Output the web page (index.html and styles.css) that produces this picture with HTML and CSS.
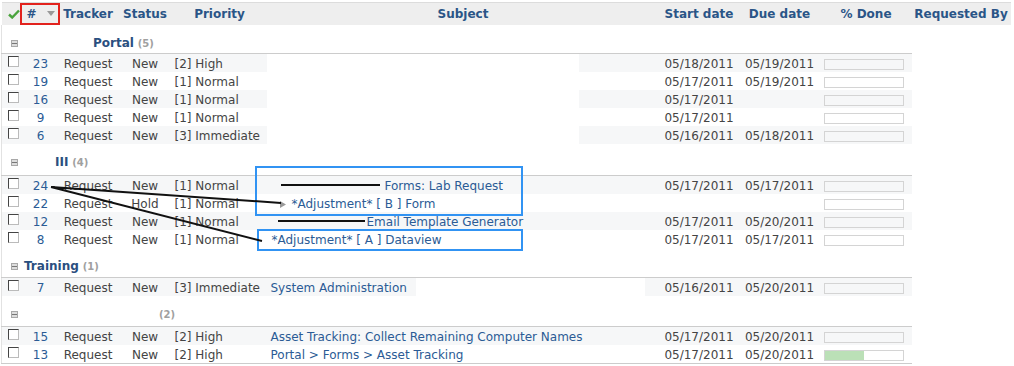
FILE: index.html
```html
<!DOCTYPE html>
<html lang="en">
  <head>
    <meta charset="UTF-8" />
    <title>Issues</title>
    <link rel="stylesheet" href="styles.css">
  </head>
  <body>
    <div class="sheet">
      <table class="issues">
        <colgroup>
          <col class="c-check" />
          <col class="c-id" />
          <col class="c-tracker" />
          <col class="c-status" />
          <col class="c-priority" />
          <col class="c-subject" />
          <col class="c-start" />
          <col class="c-due" />
          <col class="c-done" />
          <col class="c-author" />
        </colgroup>
        <thead>
          <tr>
            <th>
              <svg class="check-all" width="12" height="10" viewBox="0 0 12 10">
                <path d="M1 5.5 L4.2 8.5 L11 1.5" fill="none" stroke="#4aa33c" stroke-width="2.4" />
              </svg>
            </th>
            <th>#<svg class="sort" width="8" height="5" viewBox="0 0 8 5"><path d="M0 0 H8 L4 5 Z" fill="#999" /></svg></th>
            <th>Tracker</th>
            <th>Status</th>
            <th>Priority</th>
            <th>Subject</th>
            <th>Start date</th>
            <th>Due date</th>
            <th>% Done</th>
            <th>Requested By</th>
          </tr>
        </thead>
        <tbody>
          <tr class="group g-short">
            <td colspan="9"><span class="toggle"></span><span class="name shift-portal">Portal</span> <span class="count">(5)</span></td>
            <td class="author"></td>
          </tr>
          <tr class="odd">
            <td><span class="cb"></span></td>
            <td class="id"><a href="#">23</a></td>
            <td class="tracker">Request</td>
            <td class="status">New</td>
            <td class="priority">[2] High</td>
            <td class="subject masked"></td>
            <td class="date">05/18/2011</td>
            <td class="date">05/19/2011</td>
            <td><div class="progress"></div></td>
            <td class="author"></td>
          </tr>
          <tr>
            <td><span class="cb"></span></td>
            <td class="id"><a href="#">19</a></td>
            <td class="tracker">Request</td>
            <td class="status">New</td>
            <td class="priority">[1] Normal</td>
            <td class="subject masked"></td>
            <td class="date">05/17/2011</td>
            <td class="date">05/19/2011</td>
            <td><div class="progress"></div></td>
            <td class="author"></td>
          </tr>
          <tr class="odd">
            <td><span class="cb"></span></td>
            <td class="id"><a href="#">16</a></td>
            <td class="tracker">Request</td>
            <td class="status">New</td>
            <td class="priority">[1] Normal</td>
            <td class="subject masked"></td>
            <td class="date">05/17/2011</td>
            <td class="date"></td>
            <td><div class="progress"></div></td>
            <td class="author"></td>
          </tr>
          <tr>
            <td><span class="cb"></span></td>
            <td class="id"><a href="#">9</a></td>
            <td class="tracker">Request</td>
            <td class="status">New</td>
            <td class="priority">[1] Normal</td>
            <td class="subject masked"></td>
            <td class="date">05/17/2011</td>
            <td class="date"></td>
            <td><div class="progress"></div></td>
            <td class="author"></td>
          </tr>
          <tr class="odd">
            <td><span class="cb"></span></td>
            <td class="id"><a href="#">6</a></td>
            <td class="tracker">Request</td>
            <td class="status">New</td>
            <td class="priority">[3] Immediate</td>
            <td class="subject masked"></td>
            <td class="date">05/16/2011</td>
            <td class="date">05/18/2011</td>
            <td><div class="progress"></div></td>
            <td class="author"></td>
          </tr>

          <tr class="group g-tall">
            <td colspan="9"><span class="toggle"></span><span class="name shift-iii">III</span> <span class="count">(4)</span></td>
            <td class="author"></td>
          </tr>
          <tr class="odd">
            <td><span class="cb"></span></td>
            <td class="id"><a href="#">24</a></td>
            <td class="tracker">Request</td>
            <td class="status">New</td>
            <td class="priority">[1] Normal</td>
            <td class="subject pad-lab"><a href="#">Forms: Lab Request</a></td>
            <td class="date">05/17/2011</td>
            <td class="date">05/17/2011</td>
            <td><div class="progress"></div></td>
            <td class="author"></td>
          </tr>
          <tr>
            <td><span class="cb"></span></td>
            <td class="id"><a href="#">22</a></td>
            <td class="tracker">Request</td>
            <td class="status">Hold</td>
            <td class="priority">[1] Normal</td>
            <td class="subject child"><svg class="arrow" width="6" height="7" viewBox="0 0 6 7"><path d="M0 0 L6 3.5 L0 7 Z" fill="#999" /></svg><a href="#">*Adjustment* [ B ] Form</a></td>
            <td class="date"></td>
            <td class="date"></td>
            <td><div class="progress"></div></td>
            <td class="author"></td>
          </tr>
          <tr class="odd">
            <td><span class="cb"></span></td>
            <td class="id"><a href="#">12</a></td>
            <td class="tracker">Request</td>
            <td class="status">New</td>
            <td class="priority">[1] Normal</td>
            <td class="subject pad-email"><a href="#">Email Template Generator</a></td>
            <td class="date">05/17/2011</td>
            <td class="date">05/20/2011</td>
            <td><div class="progress"></div></td>
            <td class="author"></td>
          </tr>
          <tr>
            <td><span class="cb"></span></td>
            <td class="id"><a href="#">8</a></td>
            <td class="tracker">Request</td>
            <td class="status">New</td>
            <td class="priority">[1] Normal</td>
            <td class="subject pad-data"><a href="#">*Adjustment* [ A ] Dataview</a></td>
            <td class="date">05/17/2011</td>
            <td class="date">05/17/2011</td>
            <td><div class="progress"></div></td>
            <td class="author"></td>
          </tr>

          <tr class="group">
            <td colspan="9"><span class="toggle"></span><span class="name">Training</span> <span class="count">(1)</span></td>
            <td class="author"></td>
          </tr>
          <tr class="odd">
            <td><span class="cb"></span></td>
            <td class="id"><a href="#">7</a></td>
            <td class="tracker">Request</td>
            <td class="status">New</td>
            <td class="priority">[3] Immediate</td>
            <td class="subject cut"><a href="#">System Administration</a></td>
            <td class="date">05/16/2011</td>
            <td class="date">05/20/2011</td>
            <td><div class="progress"></div></td>
            <td class="author"></td>
          </tr>

          <tr class="group g-mid">
            <td colspan="9"><span class="toggle"></span><span class="count shift-blank">(2)</span></td>
            <td class="author"></td>
          </tr>
          <tr class="odd">
            <td><span class="cb"></span></td>
            <td class="id"><a href="#">15</a></td>
            <td class="tracker">Request</td>
            <td class="status">New</td>
            <td class="priority">[2] High</td>
            <td class="subject"><a href="#">Asset Tracking: Collect Remaining Computer Names</a></td>
            <td class="date">05/17/2011</td>
            <td class="date">05/20/2011</td>
            <td><div class="progress"></div></td>
            <td class="author"></td>
          </tr>
          <tr class="last">
            <td><span class="cb"></span></td>
            <td class="id"><a href="#">13</a></td>
            <td class="tracker">Request</td>
            <td class="status">New</td>
            <td class="priority">[2] High</td>
            <td class="subject"><a href="#">Portal &gt; Forms &gt; Asset Tracking</a></td>
            <td class="date">05/17/2011</td>
            <td class="date">05/20/2011</td>
            <td><div class="progress"><div class="done" style="width: 50%"></div></div></td>
            <td class="author"></td>
          </tr>
        </tbody>
      </table>

      <!-- review marks drawn over the list -->
      <svg class="marks" width="1014" height="366" viewBox="0 0 1014 366">
        <rect x="21" y="4" width="38" height="20" fill="none" stroke="#e2221d" stroke-width="2" />
        <rect x="256" y="167" width="266" height="48" fill="none" stroke="#3193f3" stroke-width="2" />
        <rect x="258" y="230" width="264" height="20" fill="none" stroke="#3193f3" stroke-width="2" />
        <path d="M51 187 L281 203 M51 187 L262 241 M281 185 H380 M278 221 H365" fill="none" stroke="#111" stroke-width="2" />
      </svg>
    </div>
  </body>
</html>
```

FILE: styles.css
```css
body {
  margin: 0;
  font-family: "DejaVu Sans", Verdana, sans-serif;
  font-size: 12px;
  color: #444;
  background: #fff;
}

a {
  color: #2b5b95;
  text-decoration: none;
}

.sheet {
  position: relative;
  width: 1014px;
  height: 366px;
  padding-top: 2px;
  box-sizing: border-box;
  overflow: hidden;
}

.issues {
  margin-left: 1px;
  width: 1009px;
  table-layout: fixed;
  border-collapse: collapse;
}

.c-check { width: 21px; }
.c-id { width: 36px; }
.c-tracker { width: 59px; }
.c-status { width: 55px; }
.c-priority { width: 94px; }
.c-subject { width: 393px; }
.c-start { width: 79px; }
.c-due { width: 82px; }
.c-done { width: 91px; }
.c-author { width: 99px; }

.issues th {
  height: 22px;
  padding: 0;
  background: #eee;
  border-top: 1px solid #dcdcdc;
  color: #2a5587;
  font-weight: bold;
  text-align: center;
  white-space: nowrap;
}

.check-all {
  display: block;
  margin: 0 0 0 6px;
}

.sort {
  margin-left: 10px;
  vertical-align: 2px;
}

.issues td {
  height: 16px;
  padding: 2px 2px 0;
  line-height: 16px;
  vertical-align: top;
  white-space: nowrap;
  overflow: hidden;
}

.issues tbody td:first-child {
  border-left: 1px solid #e2e2e2;
}

tr.odd td {
  background: #f6f7f8;
}

.issues td.author {
  background: #fff;
  border: none;
}

.cb {
  display: block;
  width: 9px;
  height: 9px;
  margin: 0 0 0 4px;
  background: #fff;
  border: 1px solid;
  border-color: #444 #bbb #bbb #444;
}

.id,
.tracker,
.status,
.date {
  text-align: center;
}

.issues td.priority {
  padding-left: 2px;
}

.issues td.subject {
  padding-left: 4px;
}

.issues td.pad-lab { padding-left: 118px; }
.issues td.pad-email { padding-left: 100px; }
.issues td.pad-data { padding-left: 5px; }
.issues td.child { padding-left: 13px; }

.arrow {
  margin-right: 6px;
  vertical-align: 0;
}

/* redacted parts of the subject column */
tr td.masked {
  background: linear-gradient(90deg, #fff 312px, transparent 312px);
}

tr.odd td.masked {
  background: linear-gradient(90deg, #fff 312px, #f6f7f8 312px);
}

tr.odd td.cut {
  background: linear-gradient(90deg, #f6f7f8 149px, #fff 149px, #fff 378px, #f6f7f8 378px);
}

.progress {
  width: 78px;
  height: 9px;
  margin: 3px 0 0 1px;
  border: 1px solid #d4d4d4;
}

.progress .done {
  height: 100%;
  background: #bbe0b7;
}

tr.last td {
  border-bottom: 1px solid #ccc;
}

.issues tr.group td {
  height: 15px;
  padding: 11px 0 3px 9px;
  line-height: 15px;
  border-bottom: 1px solid #ccc;
}

.issues tr.g-short td { padding-bottom: 2px; }
.issues tr.g-tall td { padding-bottom: 5px; }
.issues tr.g-mid td { padding-bottom: 4px; }

.issues tr.group td.author {
  border-bottom: none;
}

.toggle {
  display: inline-block;
  width: 5px;
  height: 5px;
  margin-right: 6px;
  border: 1px solid #a8a8a8;
  background: linear-gradient(#ddd 2px, #777 2px, #777 3px, #ddd 3px);
  vertical-align: 0;
}

.name {
  color: #2a4f80;
  font-weight: bold;
}

.count {
  color: #a0a0a0;
  font-size: 10px;
  font-weight: bold;
}

.shift-portal { margin-left: 69px; }
.shift-iii { margin-left: 31px; }
.shift-blank { margin-left: 135px; }

.marks {
  position: absolute;
  top: 0;
  left: 0;
  pointer-events: none;
}
```
